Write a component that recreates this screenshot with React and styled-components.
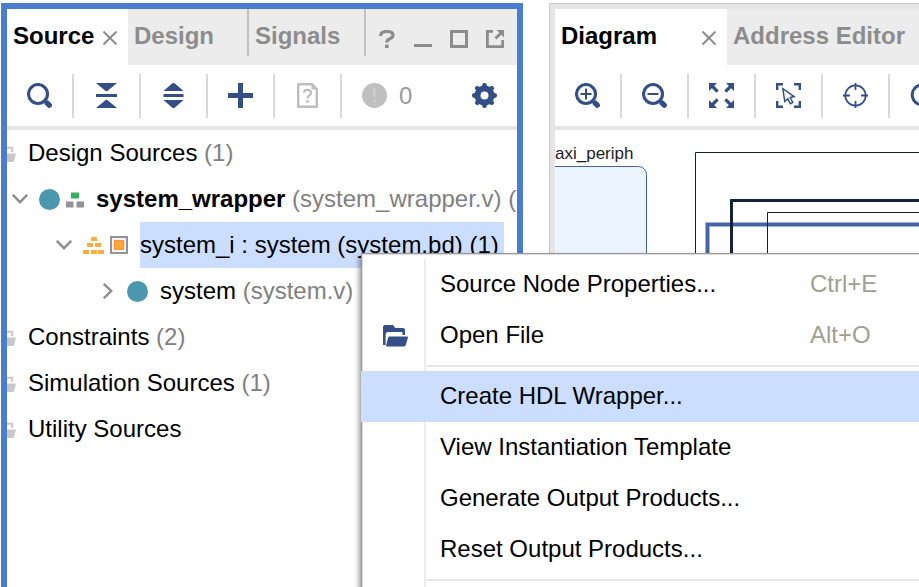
import React from "react";
import styled, { createGlobalStyle } from "styled-components";

const NAVY = "#334f86";
const SELECT = "#cbdeff";
const RULE = "#e6e6e6";

const GlobalStyle = createGlobalStyle`
  *, *::before, *::after { box-sizing: border-box; }
  body {
    margin: 0;
    background: #fff;
    color: #000;
    font: 24px/28px "Liberation Sans", Arial, sans-serif;
  }
  button { font: inherit; color: inherit; background: none; border: 0; padding: 0; }
  svg { display: block; flex: none; }
`;

const Workspace = styled.main`
  position: relative;
  display: grid;
  grid-template-columns: minmax(0, 522fr) minmax(0, 370fr);
  column-gap: 26px;
  height: 100vh;
  padding: 3px 0 0 1px;
  overflow: hidden;
`;

const Panel = styled.section`
  display: flex;
  flex-direction: column;
  min-width: 0;
  overflow: hidden;
`;

const SourcesPanel = styled(Panel)`
  border: solid #4a7dd0;
  border-width: 6px 6px 0;
`;

const DiagramPanel = styled(Panel)`
  border: solid #c8c8c8;
  border-width: 1px 0 0 1px;
  box-shadow: inset 5px 5px 0 ${RULE};
  padding: 5px 0 0 5px;
`;

const TabBar = styled.div`
  display: flex;
  flex: none;
  height: 56px;
  background: #ececec;
`;

const Tab = styled.button`
  display: flex;
  flex: none;
  justify-content: space-between;
  align-items: flex-start;
  width: ${(p) => p.$width}px;
  height: ${(p) => (p.$active ? 56 : 47)}px;
  padding: 13px 8px 0 6px;
  background: ${(p) => (p.$active ? "#fff" : "transparent")};
  color: ${(p) => (p.$active ? "#000" : "#8c8c8c")};
  border-right: ${(p) => (p.$divided ? "2px solid #c2c2c2" : "0")};
  font-weight: bold;
  white-space: nowrap;
`;

const CloseMark = styled.svg`
  margin: 9px 3px 0 0;
`;

const WindowControls = styled.div`
  display: flex;
  flex: none;
  padding: 12px 0 0 3px;
`;

const WindowButton = styled.button`
  display: grid;
  place-items: center;
  width: 36px;
  height: 36px;
  color: #8c8c8c;
`;

const Toolbar = styled.div`
  display: flex;
  flex: none;
  align-items: center;
  height: 65px;
  border-bottom: 4px solid ${RULE};
  color: ${NAVY};
  overflow: hidden;
`;

const ToolButton = styled.button`
  display: grid;
  flex: none;
  place-items: center;
  width: 67px;
  height: 44px;
  border-right: 2px solid #d9d9d9;
  color: ${(p) => (p.$muted ? "#bdbdbd" : NAVY)};
`;

const Messages = styled.div`
  display: flex;
  align-items: center;
  gap: 12px;
  padding-left: 20px;
  color: #9a9a9a;
`;

const SettingsButton = styled.button`
  margin: 0 20px 0 auto;
  color: ${NAVY};
`;

const Tree = styled.ul`
  flex: 1;
  margin: 0;
  padding: 0;
  list-style: none;
  overflow: hidden;
`;

const TreeRow = styled.li`
  display: flex;
  align-items: center;
  height: 46px;
  padding-left: ${(p) => p.$indent}px;
  white-space: nowrap;
`;

const Twisty = styled.button`
  display: grid;
  flex: none;
  place-items: center;
  width: 18px;
  height: 24px;
  margin-right: 10px;
  color: #8e8e8e;
`;

const NodeIcons = styled.span`
  display: flex;
  align-items: center;
  gap: 6px;
  margin-right: 12px;
`;

const NodeLabel = styled.span`
  padding-right: ${(p) => (p.$selected ? 5 : 0)}px;
  line-height: 46px;
  font-weight: ${(p) => (p.$bold ? "bold" : "normal")};
  background: ${(p) => (p.$selected ? SELECT : "transparent")};
`;

const Detail = styled.span`
  color: #808080;
  font-weight: normal;
`;

const Canvas = styled.svg`
  flex: 1;
  width: 100%;
  min-height: 0;
`;

const Menu = styled.div`
  position: absolute;
  top: 253px;
  left: 361px;
  right: -20px;
  bottom: -20px;
  display: flex;
  flex-direction: column;
  background: #fff;
  box-shadow: inset 1px 1px 0 #999, inset 2px 2px 0 #ddd, -2px 3px 5px rgba(0, 0, 0, 0.4);
  padding-top: 6px;
`;

const MenuItem = styled.button`
  display: grid;
  flex: none;
  grid-template-columns: 65px 1fr 129px;
  align-items: center;
  width: 100%;
  height: 51px;
  text-align: left;
  white-space: nowrap;
  background: ${(p) => (p.$active ? SELECT : "transparent")};
`;

const Gutter = styled.span`
  display: flex;
  align-items: center;
  height: 51px;
  padding-left: 22px;
  border-right: 2px solid ${(p) => (p.$plain ? "transparent" : "#ededed")};
  color: ${NAVY};
`;

const MenuText = styled.span`
  padding: 0 0 1px 14px;
`;

const Shortcut = styled.span`
  padding-bottom: 1px;
  color: #a09f90;
`;

const MenuSeparator = styled.div`
  display: grid;
  flex: ${(p) => (p.$last ? "1 0 10px" : "0 0 10px")};
  grid-template-columns: 65px 1fr;

  &::before {
    content: "";
    border-right: 2px solid #ededed;
  }
  &::after {
    content: "";
    height: 2px;
    margin-top: 4px;
    background: #e8e8e8;
  }
`;

function Icon({ size = 25, children }) {
  return (
    <svg width={size} height={size} viewBox={`0 0 ${size} ${size}`} fill="none" stroke="currentColor" aria-hidden="true">
      {children}
    </svg>
  );
}

const Lens = ({ children }) => (
  <Icon>
    <circle cx="11" cy="11" r="9.5" strokeWidth="3.1" />
    <path d="M20.2 20.2l2 2" strokeWidth="5.4" strokeLinecap="round" />
    {children}
  </Icon>
);

const CollapseIcon = () => (
  <Icon>
    <path d="M2 0H23L14 7.6Q12.5 8.8 11 7.6ZM2 11H23V14H2ZM2 25H23L14 17.4Q12.5 16.2 11 17.4Z" fill="currentColor" stroke="none" />
  </Icon>
);

const ExpandIcon = () => (
  <Icon>
    <path d="M2.5 8H22.5L14 .6Q12.5-.6 11 .6ZM2.5 11H22.5V14H2.5ZM2.5 17H22.5L14 24.4Q12.5 25.6 11 24.4Z" fill="currentColor" stroke="none" />
  </Icon>
);

const PlusIcon = () => (
  <Icon>
    <path d="M12.5 0V25M0 12.5H25" strokeWidth="5" />
  </Icon>
);

const ReportIcon = () => (
  <Icon>
    <path d="M3.2 1.2H17L21.8 6V23.8H3.2Z" strokeWidth="2.4" strokeLinejoin="round" />
    <path d="M17 1L22 6H17Z" fill="currentColor" strokeWidth="1" />
    <path d="M8.8 9.6Q9 6.8 12.4 6.8 16 6.8 16 9.7 16 11.4 14.2 12.6 12.5 13.7 12.5 15.4" strokeWidth="2.2" />
    <path d="M12.5 17.2V19.8" strokeWidth="2.6" />
  </Icon>
);

const AlertIcon = () => (
  <Icon>
    <circle cx="12.5" cy="12.5" r="12.5" fill="#c0c0c0" stroke="none" />
    <path d="M12.5 5.5V14.5M12.5 16.5V19" stroke="#cccccc" strokeWidth="2.4" />
  </Icon>
);

const GearIcon = () => (
  <Icon>
    <circle cx="12.5" cy="12.5" r="7" strokeWidth="6" />
    {[0, 45, 90, 135, 180, 225, 270, 315].map((angle) => (
      <path
        key={angle}
        d="M8.6 4.4Q10.2 3.4 10.6 1 10.8 0 12.5 0T14.4 1Q14.8 3.4 16.4 4.4Z"
        fill="currentColor"
        stroke="none"
        transform={`rotate(${angle} 12.5 12.5)`}
      />
    ))}
  </Icon>
);

const FitIcon = () => (
  <Icon>
    {[0, 90, 180, 270].map((angle) => (
      <g key={angle} transform={`rotate(${angle} 12.5 12.5)`}>
        <path d="M0 0H8L0 8Z" fill="currentColor" stroke="none" />
        <path d="M2 2L8.6 8.6" strokeWidth="3.2" />
      </g>
    ))}
  </Icon>
);

const SelectAreaIcon = () => (
  <Icon>
    <path d="M1.2 7V1.2H7M18 1.2H23.8V7M23.8 18V23.8H18M7 23.8H1.2V18" strokeWidth="2.4" />
    <path d="M6.8 5.6L8.8 18.6 11.8 15.8 14.4 20.8 16.8 19.4 14.2 14.6 18.2 13.6Z" strokeWidth="1.5" />
  </Icon>
);

const TargetIcon = () => (
  <Icon>
    <circle cx="12.5" cy="12.5" r="10.2" strokeWidth="1.7" />
    <path d="M12.5 0V7M12.5 18V25M0 12.5H7M18 12.5H25" strokeWidth="1.8" />
  </Icon>
);

const RefreshIcon = () => (
  <Icon>
    <path d="M20 5.5A10 10 0 1 0 22 14" strokeWidth="3" />
    <path d="M23 1V9H15Z" fill="currentColor" stroke="none" />
  </Icon>
);

const HelpIcon = () => (
  <Icon size={18}>
    <path d="M2.6 6Q2.6 1.5 8.8 1.5 15 1.5 15 5.2 15 7.4 11.8 8.8 8.8 10 8.8 12.4" strokeWidth="3.2" />
    <path d="M8.8 14.6V18" strokeWidth="3.6" />
  </Icon>
);

const MinimizeIcon = () => (
  <Icon size={18}>
    <path d="M0 15.5H18" strokeWidth="3" />
  </Icon>
);

const MaximizeIcon = () => (
  <Icon size={18}>
    <path d="M1.5 1.5H16.5V16.5H1.5Z" strokeWidth="3" />
  </Icon>
);

const FloatIcon = () => (
  <Icon size={18}>
    <path d="M7 1.4H1.4V16.6H16.6V10" strokeWidth="2.8" />
    <path d="M10.5 0H18V7.5Z" fill="currentColor" stroke="none" />
    <path d="M9.5 8.5L15 3" strokeWidth="2.8" />
  </Icon>
);

const Close = () => (
  <CloseMark width="14" height="14" viewBox="0 0 14 14" stroke="#8c8c8c" strokeWidth="2" aria-hidden="true">
    <path d="M.5.5L13.5 13.5M13.5.5L.5 13.5" />
  </CloseMark>
);

const ModuleDot = () => (
  <Icon size={21}>
    <circle cx="10.5" cy="10.5" r="10.5" fill="#4b98ae" stroke="none" />
  </Icon>
);

const HierarchyIcon = () => (
  <Icon size={18}>
    <path d="M5 2.5H13V8.5H5Z" fill="#36b05c" stroke="none" />
    <path d="M0 11.5H7.5V17.5H0ZM10.5 11.5H18V17.5H10.5Z" fill="#929297" stroke="none" />
  </Icon>
);

const PyramidIcon = () => (
  <Icon size={21}>
    <path
      d="M8 2H14V6H8ZM4 8H10V12H4ZM12 8H18V12H12ZM0 15H6V19H0ZM8 15H14V19H8ZM15 15H21V19H15Z"
      fill="#ffab3d"
      stroke="none"
    />
  </Icon>
);

const BlockDesignIcon = () => (
  <Icon size={18}>
    <path d="M1 1H17V17H1Z" fill="#f5f3fa" stroke="#929297" strokeWidth="2" />
    <path d="M4.6 4.6H13.4V13.4H4.6Z" fill="#ffaa38" stroke="#fb9538" strokeWidth="1.4" />
  </Icon>
);

const GroupFolder = () => (
  <svg width="9" height="17" viewBox="0 0 9 17" aria-hidden="true">
    <path d="M0 2.8H5.2V7" fill="none" stroke="#c8c8c8" strokeWidth="2" />
    <path d="M0 8.5H9L7 16.2Q6.8 17 6 17H0Z" fill="#c8c8c8" />
  </svg>
);

const OpenFolder = () => (
  <svg width="25" height="22" viewBox="0 0 25 22" fill={NAVY} aria-hidden="true">
    <path d="M0 20V2Q0 0 2 0H9.5Q10.5 0 11 1L12 3H20Q22 3 22 5V10H19.5V7H5Q2.6 7 2.6 9.5V20Z" />
    <path d="M6.5 11.6H24Q25.2 11.6 24.9 12.8L22.8 20Q22.4 21.4 21 21.4H3.6Q2.8 21.4 3.1 20.4L5 13Q5.4 11.6 6.5 11.6Z" />
  </svg>
);

const ChevronDown = () => (
  <svg width="16" height="10" viewBox="0 0 16 10" fill="none" stroke="currentColor" strokeWidth="2.4" aria-hidden="true">
    <path d="M.8 .8L8 8.2 15.2 .8" />
  </svg>
);

const ChevronRight = () => (
  <svg width="10" height="16" viewBox="0 0 10 16" fill="none" stroke="currentColor" strokeWidth="2.4" aria-hidden="true">
    <path d="M.8 .8L8.2 8 .8 15.2" />
  </svg>
);

const sourceTools = [
  { label: "Search", icon: <Lens /> },
  { label: "Collapse all", icon: <CollapseIcon /> },
  { label: "Expand all", icon: <ExpandIcon /> },
  { label: "Add sources", icon: <PlusIcon /> },
  { label: "Report", icon: <ReportIcon />, muted: true },
];

const diagramTools = [
  { label: "Zoom in", icon: <Lens><path d="M11 5.5V16.5M5.5 11H16.5" strokeWidth="2" /></Lens> },
  { label: "Zoom out", icon: <Lens><path d="M5.5 11H16.5" strokeWidth="2" /></Lens> },
  { label: "Zoom fit", icon: <FitIcon /> },
  { label: "Select area", icon: <SelectAreaIcon /> },
  { label: "Center", icon: <TargetIcon /> },
  { label: "Refresh", icon: <RefreshIcon /> },
];

const windowControls = [
  { label: "Help", icon: <HelpIcon /> },
  { label: "Minimize", icon: <MinimizeIcon /> },
  { label: "Maximize", icon: <MaximizeIcon /> },
  { label: "Float", icon: <FloatIcon /> },
];

const Tools = ({ items }) =>
  items.map(({ label, icon, muted }) => (
    <ToolButton key={label} aria-label={label} $muted={muted}>
      {icon}
    </ToolButton>
  ));

const Group = ({ name, count }) => (
  <TreeRow $indent={0} role="treeitem">
    <NodeIcons>
      <GroupFolder />
    </NodeIcons>
    <NodeLabel>
      {name} {count && <Detail>({count})</Detail>}
    </NodeLabel>
  </TreeRow>
);

const menuEntries = [
  { text: "Source Node Properties...", shortcut: "Ctrl+E" },
  { text: "Open File", shortcut: "Alt+O", icon: <OpenFolder /> },
  null,
  { text: "Create HDL Wrapper...", active: true },
  { text: "View Instantiation Template" },
  { text: "Generate Output Products..." },
  { text: "Reset Output Products..." },
  null,
];

export default function App() {
  return (
    <>
      <GlobalStyle />
      <Workspace>
        <SourcesPanel aria-label="Sources">
          <TabBar role="tablist">
            <Tab role="tab" aria-selected="true" $active $width={121}>
              Source
              <Close />
            </Tab>
            <Tab role="tab" aria-selected="false" $divided $width={121}>Design</Tab>
            <Tab role="tab" aria-selected="false" $divided $width={117}>Signals</Tab>
            <WindowControls>
              {windowControls.map(({ label, icon }) => (
                <WindowButton key={label} aria-label={label}>{icon}</WindowButton>
              ))}
            </WindowControls>
          </TabBar>
          <Toolbar role="toolbar">
            <Tools items={sourceTools} />
            <Messages>
              <AlertIcon />
              <span>0</span>
            </Messages>
            <SettingsButton aria-label="Settings">
              <GearIcon />
            </SettingsButton>
          </Toolbar>
          <Tree role="tree">
            <Group name="Design Sources" count={1} />
            <TreeRow $indent={4} role="treeitem" aria-expanded="true">
              <Twisty aria-label="Collapse system_wrapper"><ChevronDown /></Twisty>
              <NodeIcons>
                <ModuleDot />
                <HierarchyIcon />
              </NodeIcons>
              <NodeLabel $bold>
                system_wrapper <Detail>(system_wrapper.v) (</Detail>
              </NodeLabel>
            </TreeRow>
            <TreeRow $indent={48} role="treeitem" aria-expanded="true" aria-selected="true">
              <Twisty aria-label="Collapse system_i"><ChevronDown /></Twisty>
              <NodeIcons>
                <PyramidIcon />
                <BlockDesignIcon />
              </NodeIcons>
              <NodeLabel $selected>system_i : system (system.bd) (1)</NodeLabel>
            </TreeRow>
            <TreeRow $indent={92} role="treeitem" aria-expanded="false">
              <Twisty aria-label="Expand system"><ChevronRight /></Twisty>
              <NodeIcons>
                <ModuleDot />
              </NodeIcons>
              <NodeLabel>
                system <Detail>(system.v)</Detail>
              </NodeLabel>
            </TreeRow>
            <Group name="Constraints" count={2} />
            <Group name="Simulation Sources" count={1} />
            <Group name="Utility Sources" />
          </Tree>
        </SourcesPanel>

        <DiagramPanel aria-label="Block design">
          <TabBar role="tablist">
            <Tab role="tab" aria-selected="true" $active $width={172}>
              Diagram
              <Close />
            </Tab>
            <Tab role="tab" aria-selected="false" $width={192}>Address Editor</Tab>
          </TabBar>
          <Toolbar role="toolbar">
            <Tools items={diagramTools} />
          </Toolbar>
          <Canvas role="img" aria-label="Block diagram">
            <text x="0" y="29" fontSize="17" fill="#1c1c1c">axi_periph</text>
            <rect x="-40" y="36.5" width="131.5" height="400" rx="8" fill="#ecf5ff" stroke="#4263a4" />
            <g fill="none">
              <path d="M140.5 500V22.5H2000" stroke="#14202e" />
              <path d="M152.5 500V94.5H2000" stroke="#a3b3d4" strokeWidth="5" />
              <path d="M152.5 500V94.5H2000" stroke="#4464a6" strokeWidth="3" />
              <path d="M176.5 500V70.5H2000" stroke="#12233a" strokeWidth="3" />
              <path d="M212.5 500V82.5H2000" stroke="#14202e" />
            </g>
          </Canvas>
        </DiagramPanel>

        <Menu role="menu">
          {menuEntries.map((entry, i) =>
            entry ? (
              <MenuItem key={entry.text} role="menuitem" $active={entry.active}>
                <Gutter $plain={entry.active}>{entry.icon}</Gutter>
                <MenuText>{entry.text}</MenuText>
                {entry.shortcut && <Shortcut>{entry.shortcut}</Shortcut>}
              </MenuItem>
            ) : (
              <MenuSeparator key={i} role="separator" $last={i === menuEntries.length - 1} />
            )
          )}
        </Menu>
      </Workspace>
    </>
  );
}
